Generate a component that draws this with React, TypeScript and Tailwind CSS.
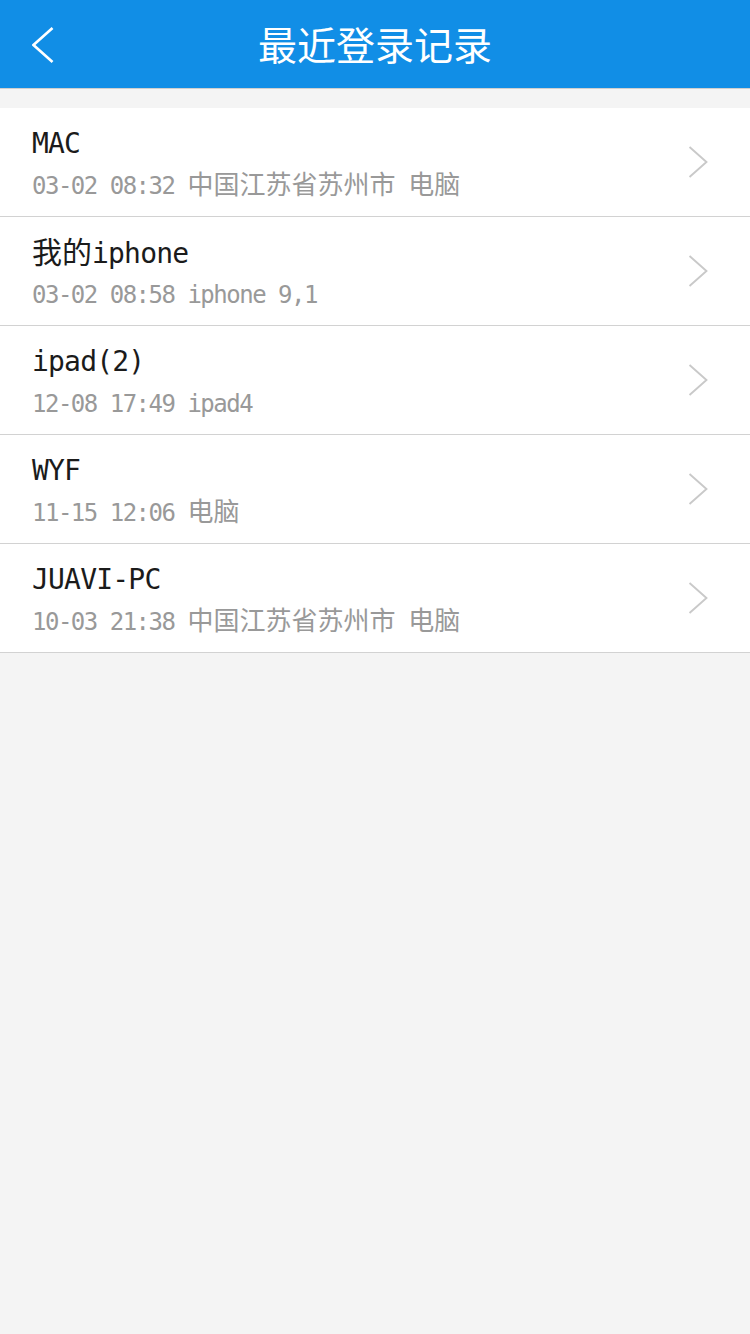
import React from 'react';

interface LoginRecord {
  device: string;
  detail: string;
}

const RECORDS: LoginRecord[] = [
  { device: 'MAC', detail: '03-02 08:32 中国江苏省苏州市 电脑' },
  { device: '我的iphone', detail: '03-02 08:58 iphone 9,1' },
  { device: 'ipad(2)', detail: '12-08 17:49 ipad4' },
  { device: 'WYF', detail: '11-15 12:06 电脑' },
  { device: 'JUAVI-PC', detail: '10-03 21:38 中国江苏省苏州市 电脑' },
];

const CJK = /([\u3000-\u9fff\uff00-\uffef]+)/;

/** Latin runs in a mono face, CJK runs in Noto so the widths line up with the phone font. */
function MixedText({ text, variant }: { text: string; variant: 'title' | 'sub' }) {
  const parts = text.split(CJK).filter(p => p.length > 0);
  return (
    <>
      {parts.map((part, i) =>
        CJK.test(part) ? (
          <span
            key={i}
            className={
              variant === 'title'
                ? "font-['Noto_Sans_CJK_SC',sans-serif] text-[30px] leading-none"
                : "font-['Noto_Sans_CJK_SC',sans-serif] text-[26px] leading-none"
            }
          >
            {part}
          </span>
        ) : (
          <span
            key={i}
            className={
              variant === 'title'
                ? 'text-[28px] leading-none tracking-[-0.8px] whitespace-pre'
                : 'text-[24px] leading-none tracking-[-1.5px] whitespace-pre'
            }
          >
            {part}
          </span>
        ),
      )}
    </>
  );
}

function Chevron({ className, color, width }: { className: string; color: string; width: number }) {
  return (
    <svg className={className} viewBox="0 0 20 34" fill="none">
      <path d="M1 1 L19 17 L1 33" stroke={color} strokeWidth={width} strokeLinejoin="miter" />
    </svg>
  );
}

function RecordRow({ record }: { record: LoginRecord }) {
  return (
    <div className="flex h-[109px] items-center justify-between border-b border-[#d2d2d2] bg-white pl-[32px] pr-[42px]">
      <div className="flex flex-col gap-[6px] pt-[6px] font-['DejaVu_Sans_Mono',monospace]">
        <div className="h-[36px] whitespace-nowrap text-[28px] leading-[36px] text-[#1b1b1b]">
          <MixedText text={record.device} variant="title" />
        </div>
        <div className="h-[36px] whitespace-nowrap text-[24px] leading-[36px] text-[#999999]">
          <MixedText text={record.detail} variant="sub" />
        </div>
      </div>
      <Chevron className="h-[32px] w-[20px]" color="#c9c9c9" width={2} />
    </div>
  );
}

export default function App() {
  return (
    <div className="flex min-h-[1334px] w-[750px] flex-col bg-[#f4f4f4]">
      <header className="relative flex h-[89px] shrink-0 items-center justify-center border-b border-[#cfcfcf] bg-[#118ee6]">
        <button type="button" className="absolute left-[32px] top-[27px]">
          <Chevron className="h-[36px] w-[22px] rotate-180" color="#ffffff" width={2.5} />
        </button>
        <h1 className="-mt-[2px] font-['Noto_Sans_CJK_SC',sans-serif] text-[39px] leading-none text-white">
          最近登录记录
        </h1>
      </header>

      <div className="mt-[19px]">
        {RECORDS.map(r => (
          <RecordRow key={r.device} record={r} />
        ))}
      </div>
    </div>
  );
}
